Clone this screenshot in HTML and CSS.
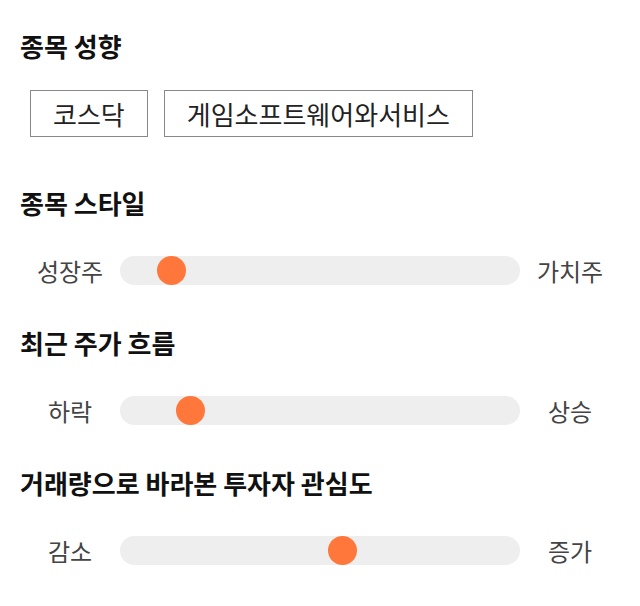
FILE: index.html
```html
<!DOCTYPE html>
<html>
<head>
    <link rel="stylesheet" href="styles.css">
</head>
<body>
    <div class="section">
        <h2 class="title">종목 성향</h2>
        <div class="tags">
            <span class="tag">코스닥</span>
            <span class="tag">게임소프트웨어와서비스</span>
        </div>
    </div>
    <div class="section">
        <h2 class="title">종목 스타일</h2>
        <div class="row">
            <span class="label">성장주</span>
            <input class="slider" type="range" min="0" max="100" value="10">
            <span class="label">가치주</span>
        </div>
    </div>
    <div class="section">
        <h2 class="title">최근 주가 흐름</h2>
        <div class="row">
            <span class="label">하락</span>
            <input class="slider" type="range" min="0" max="100" value="15">
            <span class="label">상승</span>
        </div>
    </div>
    <div class="section">
        <h2 class="title">거래량으로 바라본 투자자 관심도</h2>
        <div class="row">
            <span class="label">감소</span>
            <input class="slider" type="range" min="0" max="100" value="56">
            <span class="label">증가</span>
        </div>
    </div>
</body>
</html>
```

FILE: styles.css
```css
body {
    margin: 0;
    padding: 30px 20px 0;
    background-color: #fff;
    font-family: "Noto Sans CJK KR", "Noto Sans", sans-serif;
}
.section {
    margin-bottom: 33px;
}
.section:last-child {
    margin-bottom: 0;
}
.title {
    margin: 0 0 28px;
    font-size: 26px;
    font-weight: 700;
    line-height: 32px;
    color: #111;
}
.tags {
    display: flex;
    gap: 16px;
    padding-left: 10px;
    margin-bottom: 50px;
}
.tag {
    height: 47px;
    box-sizing: border-box;
    padding: 0 22px;
    border: 1px solid #888;
    font-size: 26px;
    line-height: 45px;
    color: #222;
}
.row {
    display: flex;
    align-items: center;
    height: 47px;
}
.label {
    width: 100px;
    text-align: center;
    font-size: 24px;
    color: #444;
}
.slider {
    -webkit-appearance: none;
    appearance: none;
    width: 400px;
    height: 29px;
    margin: 0;
    background-color: #eee;
    border-radius: 15px;
    outline: none;
}
.slider::-webkit-slider-thumb {
    -webkit-appearance: none;
    appearance: none;
    width: 29px;
    height: 29px;
    border: none;
    border-radius: 50%;
    background-color: #ff773b;
    cursor: pointer;
}
```
